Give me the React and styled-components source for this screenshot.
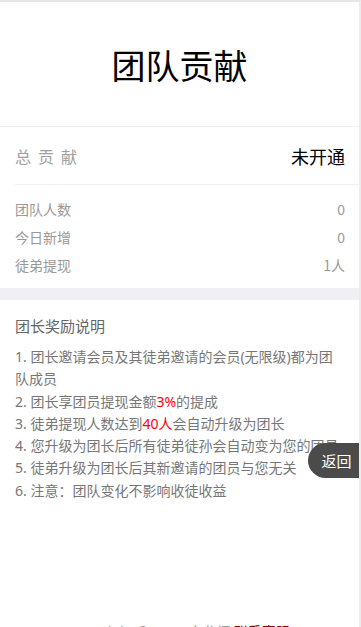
import React from "react";
import styled, { createGlobalStyle } from "styled-components";

const Global = createGlobalStyle`
  html, body { margin: 0; padding: 0; background: #fff; }
  body { font-family: "Noto Sans", "Noto Sans CJK SC", sans-serif; }
  * { box-sizing: border-box; }
`;

const Page = styled.div`
  width: 361px;
  min-height: 627px;
  border-top: 2px solid #e6e6e6;
  border-right: 2px solid #ececec;
  background: #fff;
  position: relative;
  overflow: hidden;
`;

const Header = styled.div`
  height: 125px;
  display: flex;
  align-items: center;
  justify-content: center;
  border-bottom: 1px solid #f0f0f0;
`;

const Title = styled.h1`
  margin: 0;
  font-size: 34px;
  font-weight: 400;
  color: #000;
  font-family: "Noto Sans CJK SC", sans-serif;
  letter-spacing: 0;
`;

const TotalRow = styled.div`
  height: 58px;
  margin-left: 15px;
  padding-right: 14px;
  display: flex;
  align-items: center;
  justify-content: space-between;
  border-bottom: 1px solid #f0f0f0;
`;

const TotalLabel = styled.span`
  font-size: 16px;
  color: #a0a0a0;
  letter-spacing: 7px;
  font-family: "Noto Sans CJK SC", sans-serif;
`;

const TotalValue = styled.span`
  font-size: 18px;
  color: #000;
  font-family: "Noto Sans CJK SC", sans-serif;
`;

const Stats = styled.div`
  padding: 10px 14px 9px 15px;
`;

const StatRow = styled.div`
  height: 28px;
  display: flex;
  align-items: center;
  justify-content: space-between;
  font-size: 14px;
  color: #999;
  font-family: "Noto Sans CJK SC", sans-serif;
`;

const Gap = styled.div`
  height: 12px;
  background: #efeff4;
`;

const Rules = styled.div`
  padding: 14px 15px 0 15px;
`;

const RulesTitle = styled.div`
  font-size: 15px;
  color: #666;
  line-height: 24px;
  font-family: "Noto Sans CJK SC", sans-serif;
  margin-bottom: 8px;
`;

const RuleItem = styled.div`
  font-size: 14px;
  color: #777;
  line-height: 22.3px;
  font-family: "Noto Sans", "Noto Sans CJK SC", sans-serif;
`;

const Red = styled.span`
  color: #ff0000;
`;

const BackButton = styled.div`
  position: absolute;
  right: 0;
  top: 441px;
  width: 51px;
  height: 35px;
  background: #4b4b4b;
  color: #fff;
  border-radius: 18px 0 0 18px;
  font-size: 15px;
  font-family: "Noto Sans CJK SC", sans-serif;
  display: flex;
  align-items: center;
  justify-content: center;
  padding-left: 6px;
`;

const Footer = styled.div`
  margin-top: 120px;
  text-align: center;
  font-size: 14px;
  color: #999;
  line-height: 20px;
  font-family: "Noto Sans", "Noto Sans CJK SC", sans-serif;
`;

const Link = styled.span`
  color: #8b0000;
`;

export default function App() {
  return (
    <>
      <Global />
      <Page>
        <Header>
          <Title>团队贡献</Title>
        </Header>
        <TotalRow>
          <TotalLabel>总贡献</TotalLabel>
          <TotalValue>未开通</TotalValue>
        </TotalRow>
        <Stats>
          <StatRow><span>团队人数</span><span>0</span></StatRow>
          <StatRow><span>今日新增</span><span>0</span></StatRow>
          <StatRow><span>徒弟提现</span><span>1人</span></StatRow>
        </Stats>
        <Gap />
        <Rules>
          <RulesTitle>团长奖励说明</RulesTitle>
          <RuleItem>1. 团长邀请会员及其徒弟邀请的会员(无限级)都为团队成员</RuleItem>
          <RuleItem>2. 团长享团员提现金额<Red>3%</Red>的提成</RuleItem>
          <RuleItem>3. 徒弟提现人数达到<Red>40人</Red>会自动升级为团长</RuleItem>
          <RuleItem>4. 您升级为团长后所有徒弟徒孙会自动变为您的团员</RuleItem>
          <RuleItem>5. 徒弟升级为团长后其新邀请的团员与您无关</RuleItem>
          <RuleItem>6. 注意：团队变化不影响收徒收益</RuleItem>
        </Rules>
        <Footer>
          Copyright © 2020 小龙虾 <Link>联系客服</Link>
        </Footer>
        <BackButton>返回</BackButton>
      </Page>
    </>
  );
}
